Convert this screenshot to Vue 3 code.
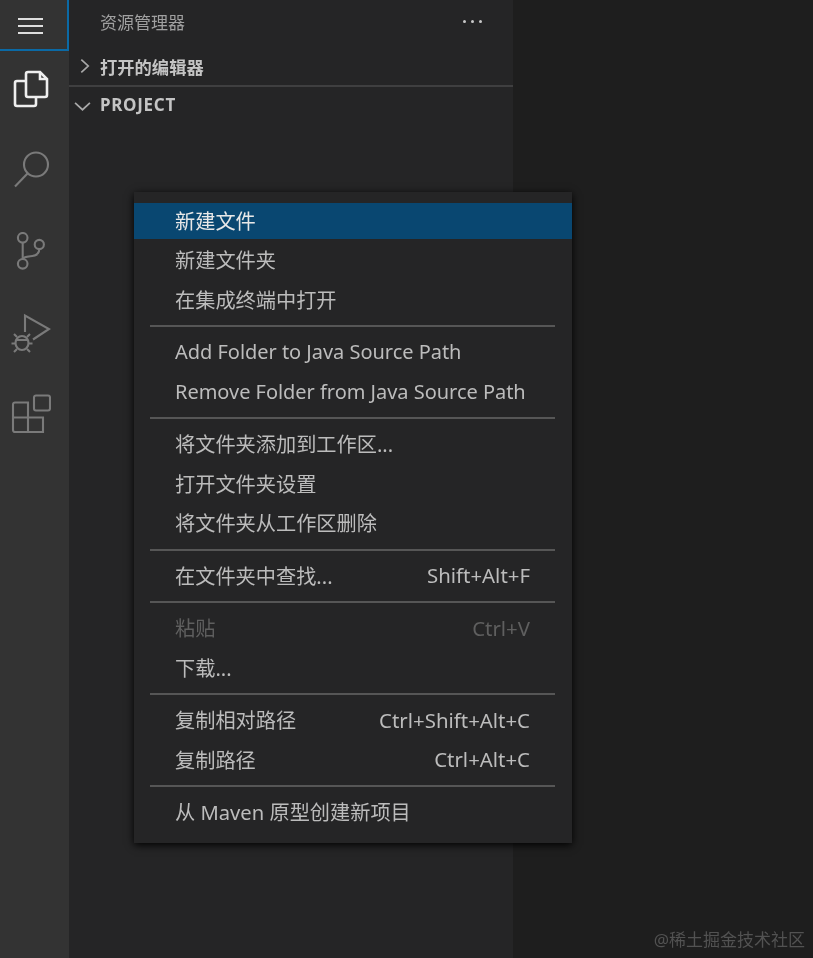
<script setup>
const isHan = (text) => /[\u4e00-\u9fff]/.test(text)
const groups = [
  [{ label: '新建文件', active: true }, { label: '新建文件夹' }, { label: '在集成终端中打开' }],
  [{ label: 'Add Folder to Java Source Path' }, { label: 'Remove Folder from Java Source Path' }],
  [{ label: '将文件夹添加到工作区...' }, { label: '打开文件夹设置' }, { label: '将文件夹从工作区删除' }],
  [{ label: '在文件夹中查找...', key: 'Shift+Alt+F' }],
  [{ label: '粘贴', key: 'Ctrl+V', disabled: true }, { label: '下载...' }],
  [{ label: '复制相对路径', key: 'Ctrl+Shift+Alt+C' }, { label: '复制路径', key: 'Ctrl+Alt+C' }],
  [{ label: '从 Maven 原型创建新项目' }],
]
</script>

<template>
  <div class="page">
    <nav class="activity">
      <div class="burger"><span></span><span></span><span></span></div>
      <div class="cell">
        <svg class="icon on" viewBox="0 0 40 40">
          <path d="M17 2H29L36 9V25a2 2 0 0 1-2 2H17a2 2 0 0 1-2-2V4a2 2 0 0 1 2-2z" />
          <path d="M29 2V9H36" />
          <path d="M15 11H6a2 2 0 0 0-2 2V34a2 2 0 0 0 2 2H23a2 2 0 0 0 2-2V27" />
        </svg>
      </div>
      <div class="cell">
        <svg class="icon" viewBox="0 0 40 40">
          <circle cx="25" cy="13.5" r="12" />
          <path d="M16.5 22.5L4 35.5" />
        </svg>
      </div>
      <div class="cell">
        <svg class="icon" viewBox="0 0 40 40">
          <circle cx="11.7" cy="5.8" r="4.8" />
          <circle cx="28.3" cy="12.5" r="4.6" />
          <circle cx="11.7" cy="31.8" r="4.8" />
          <path d="M11.7 10.6V27" />
          <path d="M28.3 17.1c0 4.5-3 6.4-7 6.9c-5 .6-9.6 .6-9.6 4" />
        </svg>
      </div>
      <div class="cell">
        <svg class="icon" viewBox="0 0 40 40">
          <path d="M14 19V2.5L38 16L22 26.5" />
          <ellipse cx="11" cy="30" rx="6.500" ry="7" />
          <path d="M5 27H17M6 24L3 21M16 24L19 21M4.500 30.500H0.500M17.500 30.500H21.500M6 36L3 39M16 36L19 39" />
        </svg>
      </div>
      <div class="cell">
        <svg class="icon" viewBox="0 0 40 40">
          <rect x="23" y="1.500" width="16" height="15" rx="2" />
          <path d="M4 8.500H17V23.500H32V38H4a2 2 0 0 1-2-2V10.500a2 2 0 0 1 2-2z" />
          <path d="M2 23.500H17M17 23.500V38" />
        </svg>
      </div>
    </nav>

    <aside class="side">
      <header class="side-head">
        <span>资源管理器</span>
        <span class="dots"><i></i><i></i><i></i></span>
      </header>
      <div class="section ruled">
        <svg class="chev" viewBox="0 0 16 16"><path d="M5 2L11.500 8L5 14" /></svg>
        <span class="open">打开的编辑器</span>
      </div>
      <div class="section">
        <svg class="chev" viewBox="0 0 16 16"><path d="M1 5L8 11.500L15 5" /></svg>
        <span class="project">PROJECT</span>
      </div>
    </aside>

    <main class="editor">
      <div class="mark">@稀土掘金技术社区</div>
    </main>

    <div class="menu">
      <template v-for="(group, g) in groups" :key="g">
        <div v-if="g" class="sep"></div>
        <div class="group">
          <div
            v-for="item in group"
            :key="item.label"
            class="item"
            :class="{ active: item.active, disabled: item.disabled }"
          >
            <span :class="{ han: isHan(item.label) }">{{ item.label }}</span>
            <span v-if="item.key" class="key">{{ item.key }}</span>
          </div>
        </div>
      </template>
    </div>
  </div>
</template>

<style>
html, body { margin: 0; background: #1e1e1e; }
</style>

<style scoped>
.page {
  position: relative;
  display: flex;
  width: 813px;
  height: 958px;
  overflow: hidden;
  background: #1e1e1e;
  font-family: "Noto Sans", "Noto Sans CJK SC", sans-serif;
  filter: blur(0.5px);
}
.activity {
  flex: 0 0 69px;
  display: flex;
  flex-direction: column;
  background: #333333;
}
.burger {
  box-sizing: border-box;
  height: 51px;
  display: flex;
  flex-direction: column;
  justify-content: center;
  align-items: center;
  gap: 5px;
  padding: 2px 7px 0 0;
  border-right: 2px solid #0b6aa6;
  border-bottom: 2px solid #0b6aa6;
}
.burger span {
  width: 25px;
  height: 2px;
  background: #dedede;
}
.cell {
  box-sizing: border-box;
  height: 81px;
  display: flex;
  align-items: center;
  padding: 0 0 4px 11px;
}
.icon {
  width: 40px;
  height: 40px;
  fill: none;
  stroke: #7a7a7a;
  stroke-width: 2.100;
}
.icon.on {
  stroke: #efefef;
  stroke-width: 2.600;
}
.side {
  flex: 0 0 444px;
  background: #252526;
  color: #c4c4c4;
}
.side-head {
  box-sizing: border-box;
  height: 46px;
  display: flex;
  align-items: center;
  justify-content: space-between;
  padding: 0 31px 4px 31px;
  font-size: 17px;
  color: #a0a0a0;
}
.dots { display: flex; gap: 5px; }
.dots i {
  width: 3px;
  height: 3px;
  border-radius: 50%;
  background: #c8c8c8;
}
.section {
  box-sizing: border-box;
  height: 37px;
  display: flex;
  align-items: center;
  padding: 0 0 2px 31px;
  position: relative;
  font-size: 17px;
  font-weight: 700;
}
.section.ruled {
  height: 41px;
  padding: 2px 0 0 31px;
  border-bottom: 2px solid #3f3f40;
}
.open { font-size: 17.300px; }
.project { letter-spacing: 0.700px; }
.chev {
  position: absolute;
  left: 5px;
  top: 50%;
  width: 17px;
  height: 17px;
  transform: translateY(-50%);
  fill: none;
  stroke: #a8a8a8;
  stroke-width: 1.600;
}
.ruled .chev { left: 7px; }
.editor {
  flex: 1;
  position: relative;
}
.mark {
  position: absolute;
  right: 8px;
  bottom: 7px;
  font-size: 17px;
  color: #525252;
}
.menu {
  position: absolute;
  left: 134px;
  top: 192px;
  box-sizing: border-box;
  width: 438px;
  height: 651px;
  padding-top: 11px;
  background: #252526;
  box-shadow: 0 2px 8px #000000;
  font-size: 20px;
  color: #bcbcbc;
}
.group {
  display: flex;
  flex-direction: column;
  gap: 3.500px;
}
.item {
  box-sizing: border-box;
  height: 36px;
  display: flex;
  align-items: center;
  justify-content: space-between;
  padding: 0 42px 2px 41px;
  letter-spacing: -0.030px;
}
.han { font-size: 20.200px; letter-spacing: 0; }
.key { font-size: 20.400px; letter-spacing: 0; }
.item.active {
  background: #094771;
  color: #e8e8e8;
}
.item.disabled { color: #5f5f5f; }
.sep {
  height: 2px;
  margin: 7.250px 17px 7.250px 16px;
  background: #565656;
}
</style>
